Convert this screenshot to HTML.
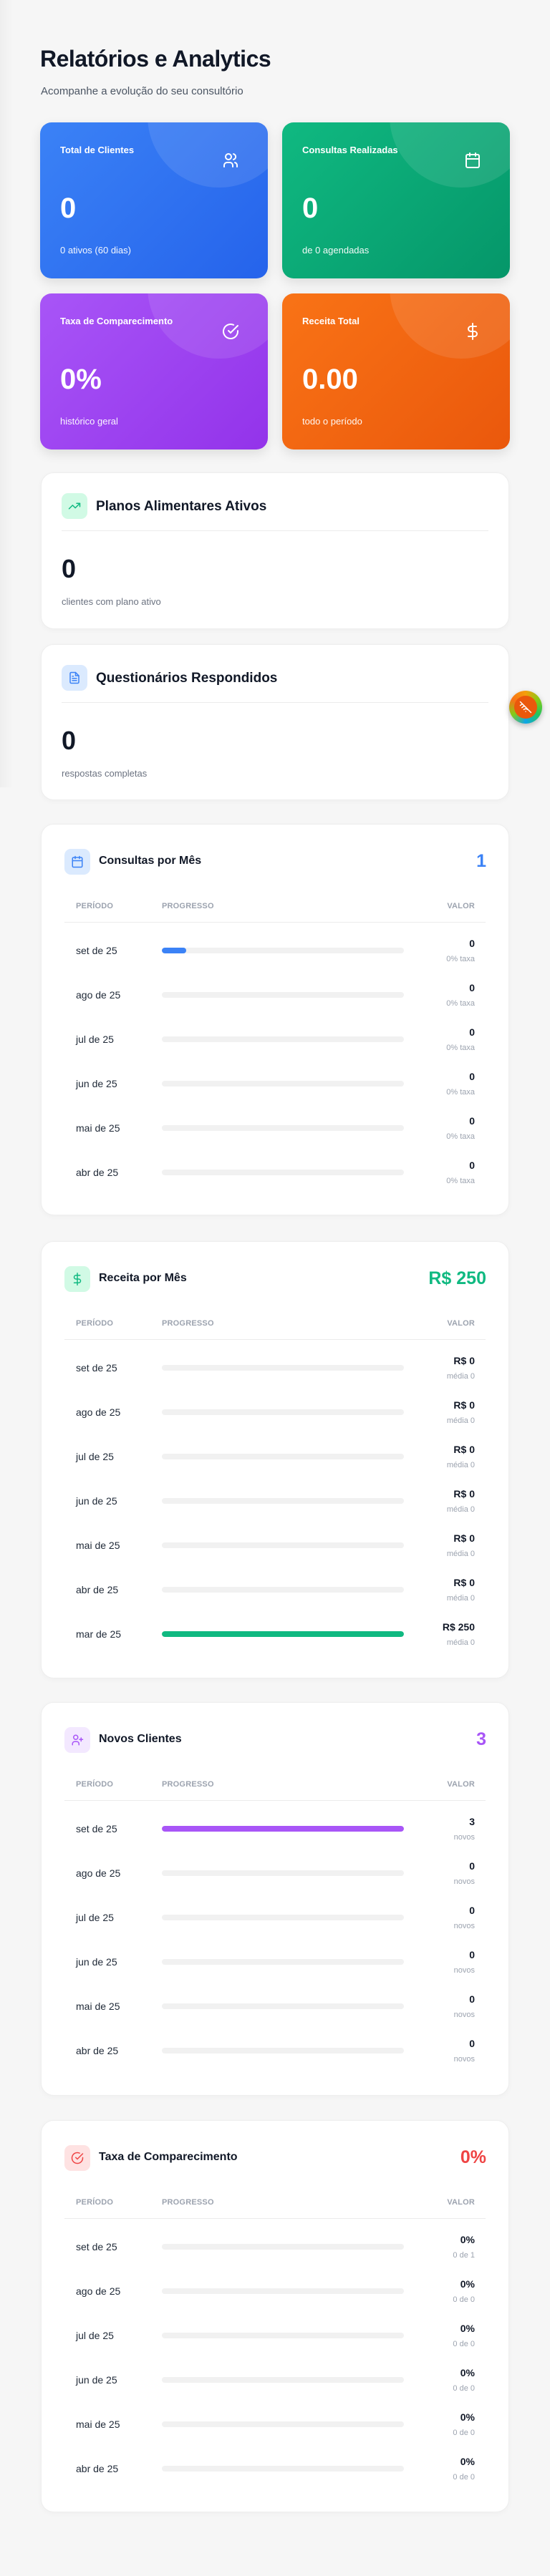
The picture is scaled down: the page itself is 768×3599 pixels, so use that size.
<!DOCTYPE html>
<html><head><meta charset="utf-8"><style>
*{box-sizing:border-box;margin:0;padding:0}
body{width:768px;height:3599px;background:#f6f6f6;font-family:"Liberation Sans",sans-serif;position:relative;overflow:hidden;color:#111827}
.abs{position:absolute}
h1{position:absolute;left:56px;top:64px;font-size:32px;font-weight:700;color:#111827;letter-spacing:-0.5px}
.sub{position:absolute;left:57px;top:119px;font-size:15px;color:#4b5563}
.stat{position:absolute;width:318px;height:218px;border-radius:16px;overflow:hidden;color:#fff;box-shadow:0 6px 16px rgba(0,0,0,.10)}
.stat .c{position:absolute;left:150px;top:-109px;width:200px;height:200px;border-radius:50%;background:rgba(255,255,255,.1)}
.stat .l{position:absolute;left:28px;top:31px;font-size:13px;font-weight:700}
.stat .v{position:absolute;left:28px;top:98px;font-size:40px;font-weight:700}
.stat .s{position:absolute;left:28px;top:171px;font-size:13px;opacity:.95}
.stat svg{position:absolute;left:254px;top:41px}
.card{position:absolute;left:57px;width:654px;background:#fff;border:1px solid #eeeeee;border-radius:18px;box-shadow:0 2px 8px rgba(0,0,0,.03)}
.ib{position:absolute;width:36px;height:36px;border-radius:9px;display:flex;align-items:center;justify-content:center}
.ct{position:absolute;font-size:16px;font-weight:700;color:#111827}
.big{position:absolute;right:31px;font-size:25px;font-weight:700}
.hd{position:absolute;font-size:11px;font-weight:700;color:#9ca3af;letter-spacing:.2px}
.dv{position:absolute;left:32px;right:32px;height:1px;background:#ececec}
.rl{position:absolute;left:48px;font-size:14px;color:#1f2937}
.bar{position:absolute;left:168px;width:338px;height:8px;border-radius:4px;background:#f1f1f1;overflow:hidden}
.bar i{display:block;height:100%;border-radius:4px}
.rv{position:absolute;right:47px;font-size:14px;font-weight:700;text-align:right;color:#111827}
.rs{position:absolute;right:47px;font-size:11px;color:#9ca3af;text-align:right}
</style></head><body>
<div class="abs" style="left:0;top:0;width:18px;height:1100px;background:linear-gradient(90deg,#eeeeee,#f6f6f6)"></div>
<h1>Relatórios e Analytics</h1>
<div class="sub">Acompanhe a evolução do seu consultório</div>

<div class="stat" style="left:56px;top:171px;background:linear-gradient(135deg,#3b82f6,#2563eb)"><div class="c"></div><div class="l">Total de Clientes</div>
<svg width="24" height="24" viewBox="0 0 24 24" fill="none" stroke="#fff" stroke-width="2" stroke-linecap="round"><circle cx="9" cy="7" r="4"/><path d="M3 21v-2a4 4 0 0 1 4-4h4a4 4 0 0 1 4 4v2M16 3.1a4 4 0 0 1 0 7.8M21 21v-2a4 4 0 0 0-3-3.9"/></svg>
<div class="v">0</div><div class="s">0 ativos (60 dias)</div></div>

<div class="stat" style="left:394px;top:171px;background:linear-gradient(135deg,#10b981,#059669)"><div class="c"></div><div class="l">Consultas Realizadas</div>
<svg width="24" height="24" viewBox="0 0 24 24" fill="none" stroke="#fff" stroke-width="2" stroke-linecap="round"><rect x="3" y="4" width="18" height="18" rx="2"/><path d="M16 2v4M8 2v4M3 10h18"/></svg>
<div class="v">0</div><div class="s">de 0 agendadas</div></div>

<div class="stat" style="left:56px;top:410px;background:linear-gradient(135deg,#a855f7,#9333ea)"><div class="c"></div><div class="l">Taxa de Comparecimento</div>
<svg width="24" height="24" viewBox="0 0 24 24" fill="none" stroke="#fff" stroke-width="2" stroke-linecap="round"><path d="M22 11.1V12a10 10 0 1 1-5.9-9.1"/><path d="M22 4 12 14l-3-3"/></svg>
<div class="v">0%</div><div class="s">histórico geral</div></div>

<div class="stat" style="left:394px;top:410px;background:linear-gradient(135deg,#f97316,#ea580c)"><div class="c"></div><div class="l">Receita Total</div>
<svg width="24" height="24" viewBox="0 0 24 24" fill="none" stroke="#fff" stroke-width="2" stroke-linecap="round"><path d="M12 1v22M17 5H9.5a3.5 3.5 0 0 0 0 7h5a3.5 3.5 0 0 1 0 7H6"/></svg>
<div class="v">0.00</div><div class="s">todo o período</div></div>

<div class="card" style="top:660px;height:219px">
<div class="ib" style="left:28px;top:28px;background:#d1fae5"><svg width="18" height="18" viewBox="0 0 24 24" fill="none" stroke="#10b981" stroke-width="2" stroke-linecap="round" stroke-linejoin="round"><path d="M22 7 13.5 15.5 8.5 10.5 2 17"/><path d="M16 7h6v6"/></svg></div>
<div class="ct" style="left:76px;top:36px;font-size:19px">Planos Alimentares Ativos</div>
<div class="abs" style="left:28px;right:28px;top:80px;height:1px;background:#ececec"></div>
<div class="abs" style="left:28px;top:113px;font-size:36px;font-weight:700">0</div>
<div class="abs" style="left:28px;top:172px;font-size:13px;color:#6b7280">clientes com plano ativo</div></div>

<div class="card" style="top:900px;height:218px">
<div class="ib" style="left:28px;top:28px;background:#dbeafe"><svg width="18" height="18" viewBox="0 0 24 24" fill="none" stroke="#3b82f6" stroke-width="2" stroke-linecap="round" stroke-linejoin="round"><path d="M14 2H6a2 2 0 0 0-2 2v16a2 2 0 0 0 2 2h12a2 2 0 0 0 2-2V8z"/><path d="M14 2v6h6M16 13H8M16 17H8M10 9H8"/></svg></div>
<div class="ct" style="left:76px;top:36px;font-size:19px">Questionários Respondidos</div>
<div class="abs" style="left:28px;right:28px;top:80px;height:1px;background:#ececec"></div>
<div class="abs" style="left:28px;top:113px;font-size:36px;font-weight:700">0</div>
<div class="abs" style="left:28px;top:172px;font-size:13px;color:#6b7280">respostas completas</div></div>

<div class="abs" style="left:711px;top:965px;width:46px;height:46px;border-radius:50%;background:conic-gradient(#f59e0b,#84cc16,#22c55e,#0ea5e9,#84cc16,#f97316,#f59e0b);box-shadow:0 3px 8px rgba(0,0,0,.25)"><div style="position:absolute;left:7px;top:7px;width:32px;height:32px;border-radius:50%;background:#ea580c"></div><svg class="abs" style="left:14px;top:14px" width="18" height="18" viewBox="0 0 24 24" fill="none" stroke="#fff" stroke-width="2" stroke-linecap="round"><path d="M2 2l20 20M8.5 16.5a5 5 0 0 1 7 0M5 13a10 10 0 0 1 5-3M2 8.8a15 15 0 0 1 4-2.5M12 20h.01"/></svg></div>

<!-- Consultas -->
<div class="card" style="top:1151px;height:547px">
<div class="ib" style="left:32px;top:34px;background:#dbeafe"><svg width="18" height="18" viewBox="0 0 24 24" fill="none" stroke="#3b82f6" stroke-width="2" stroke-linecap="round"><rect x="3" y="4" width="18" height="18" rx="2"/><path d="M16 2v4M8 2v4M3 10h18"/></svg></div>
<div class="ct" style="left:80px;top:42px">Consultas por Mês</div>
<div class="big" style="top:37px;color:#3b82f6">1</div>
<div class="hd" style="left:48px;top:108px">PERÍODO</div><div class="hd" style="left:168px;top:108px">PROGRESSO</div><div class="hd" style="right:47px;top:108px">VALOR</div>
<div class="dv" style="top:136px"></div>
<div class="rl" style="top:168px">set de 25</div><div class="bar" style="top:172px"><i style="width:10%;background:#3b82f6"></i></div><div class="rv" style="top:158px">0</div><div class="rs" style="top:182px">0% taxa</div>
<div class="rl" style="top:230px">ago de 25</div><div class="bar" style="top:234px"></div><div class="rv" style="top:220px">0</div><div class="rs" style="top:244px">0% taxa</div>
<div class="rl" style="top:292px">jul de 25</div><div class="bar" style="top:296px"></div><div class="rv" style="top:282px">0</div><div class="rs" style="top:306px">0% taxa</div>
<div class="rl" style="top:354px">jun de 25</div><div class="bar" style="top:358px"></div><div class="rv" style="top:344px">0</div><div class="rs" style="top:368px">0% taxa</div>
<div class="rl" style="top:416px">mai de 25</div><div class="bar" style="top:420px"></div><div class="rv" style="top:406px">0</div><div class="rs" style="top:430px">0% taxa</div>
<div class="rl" style="top:478px">abr de 25</div><div class="bar" style="top:482px"></div><div class="rv" style="top:468px">0</div><div class="rs" style="top:492px">0% taxa</div>
</div>

<!-- Receita -->
<div class="card" style="top:1734px;height:611px">
<div class="ib" style="left:32px;top:34px;background:#d1fae5"><svg width="18" height="18" viewBox="0 0 24 24" fill="none" stroke="#10b981" stroke-width="2" stroke-linecap="round"><path d="M12 1v22M17 5H9.5a3.5 3.5 0 0 0 0 7h5a3.5 3.5 0 0 1 0 7H6"/></svg></div>
<div class="ct" style="left:80px;top:42px">Receita por Mês</div>
<div class="big" style="top:37px;color:#10b981">R$ 250</div>
<div class="hd" style="left:48px;top:108px">PERÍODO</div><div class="hd" style="left:168px;top:108px">PROGRESSO</div><div class="hd" style="right:47px;top:108px">VALOR</div>
<div class="dv" style="top:136px"></div>
<div class="rl" style="top:168px">set de 25</div><div class="bar" style="top:172px"></div><div class="rv" style="top:158px">R$ 0</div><div class="rs" style="top:182px">média 0</div>
<div class="rl" style="top:230px">ago de 25</div><div class="bar" style="top:234px"></div><div class="rv" style="top:220px">R$ 0</div><div class="rs" style="top:244px">média 0</div>
<div class="rl" style="top:292px">jul de 25</div><div class="bar" style="top:296px"></div><div class="rv" style="top:282px">R$ 0</div><div class="rs" style="top:306px">média 0</div>
<div class="rl" style="top:354px">jun de 25</div><div class="bar" style="top:358px"></div><div class="rv" style="top:344px">R$ 0</div><div class="rs" style="top:368px">média 0</div>
<div class="rl" style="top:416px">mai de 25</div><div class="bar" style="top:420px"></div><div class="rv" style="top:406px">R$ 0</div><div class="rs" style="top:430px">média 0</div>
<div class="rl" style="top:478px">abr de 25</div><div class="bar" style="top:482px"></div><div class="rv" style="top:468px">R$ 0</div><div class="rs" style="top:492px">média 0</div>
<div class="rl" style="top:540px">mar de 25</div><div class="bar" style="top:544px"><i style="width:100%;background:#10b981"></i></div><div class="rv" style="top:530px">R$ 250</div><div class="rs" style="top:554px">média 0</div>
</div>

<!-- Novos -->
<div class="card" style="top:2378px;height:550px">
<div class="ib" style="left:32px;top:34px;background:#f3e8ff"><svg width="18" height="18" viewBox="0 0 24 24" fill="none" stroke="#a855f7" stroke-width="2" stroke-linecap="round"><circle cx="9" cy="7" r="4"/><path d="M3 21v-2a4 4 0 0 1 4-4h4a4 4 0 0 1 4 4v2M19 8v6M22 11h-6"/></svg></div>
<div class="ct" style="left:80px;top:42px">Novos Clientes</div>
<div class="big" style="top:37px;color:#a855f7">3</div>
<div class="hd" style="left:48px;top:108px">PERÍODO</div><div class="hd" style="left:168px;top:108px">PROGRESSO</div><div class="hd" style="right:47px;top:108px">VALOR</div>
<div class="dv" style="top:136px"></div>
<div class="rl" style="top:168px">set de 25</div><div class="bar" style="top:172px"><i style="width:100%;background:#a855f7"></i></div><div class="rv" style="top:158px">3</div><div class="rs" style="top:182px">novos</div>
<div class="rl" style="top:230px">ago de 25</div><div class="bar" style="top:234px"></div><div class="rv" style="top:220px">0</div><div class="rs" style="top:244px">novos</div>
<div class="rl" style="top:292px">jul de 25</div><div class="bar" style="top:296px"></div><div class="rv" style="top:282px">0</div><div class="rs" style="top:306px">novos</div>
<div class="rl" style="top:354px">jun de 25</div><div class="bar" style="top:358px"></div><div class="rv" style="top:344px">0</div><div class="rs" style="top:368px">novos</div>
<div class="rl" style="top:416px">mai de 25</div><div class="bar" style="top:420px"></div><div class="rv" style="top:406px">0</div><div class="rs" style="top:430px">novos</div>
<div class="rl" style="top:478px">abr de 25</div><div class="bar" style="top:482px"></div><div class="rv" style="top:468px">0</div><div class="rs" style="top:492px">novos</div>
</div>

<!-- Taxa -->
<div class="card" style="top:2962px;height:548px">
<div class="ib" style="left:32px;top:34px;background:#fee2e2"><svg width="18" height="18" viewBox="0 0 24 24" fill="none" stroke="#ef4444" stroke-width="2" stroke-linecap="round"><path d="M22 11.1V12a10 10 0 1 1-5.9-9.1"/><path d="M22 4 12 14l-3-3"/></svg></div>
<div class="ct" style="left:80px;top:42px">Taxa de Comparecimento</div>
<div class="big" style="top:37px;color:#ef4444">0%</div>
<div class="hd" style="left:48px;top:108px">PERÍODO</div><div class="hd" style="left:168px;top:108px">PROGRESSO</div><div class="hd" style="right:47px;top:108px">VALOR</div>
<div class="dv" style="top:136px"></div>
<div class="rl" style="top:168px">set de 25</div><div class="bar" style="top:172px"></div><div class="rv" style="top:158px">0%</div><div class="rs" style="top:182px">0 de 1</div>
<div class="rl" style="top:230px">ago de 25</div><div class="bar" style="top:234px"></div><div class="rv" style="top:220px">0%</div><div class="rs" style="top:244px">0 de 0</div>
<div class="rl" style="top:292px">jul de 25</div><div class="bar" style="top:296px"></div><div class="rv" style="top:282px">0%</div><div class="rs" style="top:306px">0 de 0</div>
<div class="rl" style="top:354px">jun de 25</div><div class="bar" style="top:358px"></div><div class="rv" style="top:344px">0%</div><div class="rs" style="top:368px">0 de 0</div>
<div class="rl" style="top:416px">mai de 25</div><div class="bar" style="top:420px"></div><div class="rv" style="top:406px">0%</div><div class="rs" style="top:430px">0 de 0</div>
<div class="rl" style="top:478px">abr de 25</div><div class="bar" style="top:482px"></div><div class="rv" style="top:468px">0%</div><div class="rs" style="top:492px">0 de 0</div>
</div>
</body></html>
